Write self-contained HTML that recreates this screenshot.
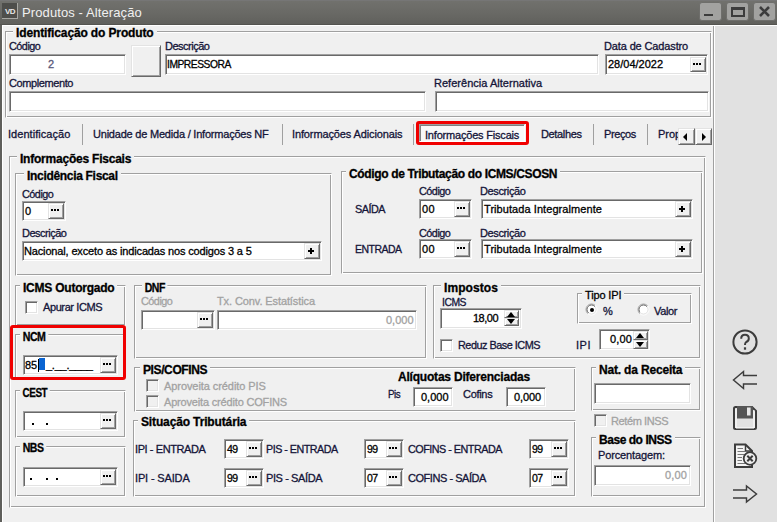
<!DOCTYPE html><html><head><meta charset="utf-8"><style>
*{margin:0;padding:0;box-sizing:border-box}
html,body{width:777px;height:522px;overflow:hidden;background:#f0f0f0;font-family:"Liberation Sans",sans-serif}
div{position:absolute}
.t{white-space:nowrap;color:#141438;-webkit-text-stroke:0.3px currentColor}
.grp{border:1px solid;border-color:#a0a0a0 #fff #fff #a0a0a0;box-shadow:inset 1px 1px 0 #fff,inset -1px -1px 0 #a0a0a0}
.ed{background:#fff;border:1px solid;border-color:#a0a0a0 #fff #fff #a0a0a0;box-shadow:inset 1px 1px 0 #696969,inset -1px -1px 0 #e3e3e3}
.bt{background:#f0f0f0;border:1px solid;border-color:#e3e3e3 #696969 #696969 #e3e3e3;box-shadow:inset 1px 1px 0 #fff,inset -1px -1px 0 #a0a0a0}
.chk{background:#fff;border:1px solid;border-color:#a0a0a0 #fff #fff #a0a0a0;box-shadow:inset 1px 1px 0 #696969,inset -1px -1px 0 #e3e3e3}
.chk.dis{background:#f0f0f0}
.dots{left:2px;top:5px;width:8px;height:2px;background:linear-gradient(90deg,#000 0 2px,transparent 2px 3px,#000 3px 5px,transparent 5px 6px,#000 6px 8px)}
.plus{left:3px;top:4px;width:6px;height:6px;background:linear-gradient(#000,#000) 0 2px/6px 2px no-repeat,linear-gradient(#000,#000) 2px 0/2px 6px no-repeat}
svg{position:absolute}
</style></head><body>
<div class="" style="left:0px;top:0px;width:777px;height:25px;background:linear-gradient(#767676 0,#767676 1px,#71716d 1px,#676763 16px,#60605c 24px,#545450 24px)"></div>
<div class="" style="left:0px;top:25px;width:2px;height:497px;background:#5f5f5b"></div>
<div class="" style="left:2px;top:25px;width:775px;height:1px;background:#fff"></div>
<div class="" style="left:2px;top:25px;width:1px;height:497px;background:#fff"></div>
<div class="" style="left:2px;top:3px;width:16px;height:16px;background:#4e4e4b;border-right:1px solid #a8a8a4;border-bottom:1px solid #a8a8a4"></div>
<div class="t" style="left:5px;top:8px;font-size:8px;line-height:8px;font-weight:bold;color:#e8e8e8;letter-spacing:-0.5px;-webkit-text-stroke:0">VD</div>
<div class="t" style="left:22.0px;top:6px;font-size:13px;line-height:13px;color:#f0f0f0;-webkit-text-stroke:0;letter-spacing:0.105px;">Produtos - Alteração</div>
<div class="" style="left:699px;top:2px;width:23px;height:19px;background:#a2a2a0;border-radius:3px;border:1px solid #6e6e6b"></div>
<div class="" style="left:726px;top:2px;width:23px;height:19px;background:#a2a2a0;border-radius:3px;border:1px solid #6e6e6b"></div>
<div class="" style="left:753px;top:2px;width:23px;height:19px;background:#a2a2a0;border-radius:3px;border:1px solid #6e6e6b"></div>
<div class="" style="left:704px;top:14px;width:9px;height:2px;background:#3c3c3c"></div>
<div class="" style="left:731px;top:7px;width:14px;height:10px;border:2px solid #3c3c3c;border-top-width:3px"></div>
<svg style="left:753px;top:2px" width="23" height="19"><path d="M7 5 L16 14 M16 5 L7 14" stroke="#3c3c3c" stroke-width="2.6"/></svg>
<div class="" style="left:713px;top:26px;width:1px;height:496px;background:#a0a0a0"></div>
<div class="" style="left:714px;top:26px;width:1px;height:496px;background:#fff"></div>
<div class="" style="left:715px;top:26px;width:62px;height:496px;background:#e1e1e1"></div>
<svg style="left:715px;top:320px" width="62" height="200" viewBox="715 320 62 200" fill="none" stroke="#3c3c3c">
<circle cx="745" cy="342" r="11.6" stroke-width="2"/>
<path d="M741.2 338.8 Q741.2 334.8 745 334.8 Q748.8 334.8 748.8 338.4 Q748.8 340.8 746.2 342 Q745 342.8 745 345" stroke-width="2"/>
<rect x="743.9" y="347.3" width="2.2" height="2.4" fill="#3c3c3c" stroke="none"/>
<path d="M757 375.5 H743.5 V371.5 L733.5 380 L743.5 388.5 V384 H757" stroke-width="1.45"/>
<path d="M733 490 H746.5 V486 L756.5 494 L746.5 502 V498 H733" stroke-width="1.45"/>
<path d="M735 407 H752 L756 411 V427.5 Q756 429 754.5 429 H735.5 Q734 429 734 427.5 V408.5 Q734 407 735.5 407 Z" stroke-width="2" fill="#e1e1e1"/>
<path d="M736 428 V409 M754 410 V428 M736 428 H754" stroke="#ffffff" stroke-width="1"/>
<rect x="737" y="406" width="16" height="12.5" fill="#555" stroke="none"/>
<rect x="747" y="407.5" width="3.6" height="8" fill="#e8e8e8" stroke="none"/>
<path d="M735 444.5 H745.5 L752 451 V467 H735 Z" stroke-width="2" fill="#f4f4f4"/>
<path d="M745.5 445 V451 H751.5" stroke-width="1.5"/>
<path d="M737.5 448.5 H743 M737.5 451.5 H745 M737.5 454.5 H745 M737.5 457.5 H742 M737.5 460.5 H742 M737.5 463.5 H745" stroke="#777" stroke-width="1"/>
<circle cx="750" cy="458.5" r="6.3" stroke-width="1.8" fill="#eeeeee"/>
<path d="M747.3 455.8 L752.7 461.2 M752.7 455.8 L747.3 461.2" stroke-width="2"/>
</svg>
<div class="grp" style="left:5px;top:31px;width:707px;height:87px;"></div>
<div class="t" style="left:13.0px;top:27px;font-size:12px;line-height:12px;font-weight:bold;color:#000;background:#f0f0f0;padding:0 3px;letter-spacing:-0.130px;">Identificação do Produto</div>
<div class="t" style="left:9.0px;top:41px;font-size:11px;line-height:11px;letter-spacing:-0.500px;transform:scaleX(0.9846);transform-origin:0 0;">Código</div>
<div class="t" style="left:165.0px;top:41px;font-size:11px;line-height:11px;letter-spacing:-0.500px;">Descrição</div>
<div class="t" style="left:604.0px;top:41px;font-size:11px;line-height:11px;letter-spacing:-0.133px;">Data de Cadastro</div>
<div class="ed" style="left:9px;top:54px;width:117px;height:21px;"></div>
<div class="t" style="left:48.0px;top:59px;font-size:11px;line-height:11px;color:#5a5a7a;">2</div>
<div class="bt" style="left:131px;top:45px;width:30px;height:32px;"></div>
<div class="ed" style="left:165px;top:54px;width:434px;height:21px;"></div>
<div class="t" style="left:167.06569343065692px;top:59px;font-size:11px;line-height:11px;color:#000;letter-spacing:-0.500px;transform:scaleX(0.9343);transform-origin:0 0;">IMPRESSORA</div>
<div class="ed" style="left:605px;top:54px;width:103px;height:21px;"></div>
<div class="bt" style="left:690px;top:57px;width:16px;height:15px;"><div class="dots"></div></div>
<div class="t" style="left:608.0px;top:59px;font-size:11px;line-height:11px;color:#000;">28/04/2022</div>
<div class="t" style="left:9.0px;top:78px;font-size:11px;line-height:11px;letter-spacing:-0.400px;">Complemento</div>
<div class="t" style="left:434.0px;top:78px;font-size:11px;line-height:11px;letter-spacing:0.024px;">Referência Alternativa</div>
<div class="ed" style="left:9px;top:91px;width:417px;height:21px;"></div>
<div class="ed" style="left:435px;top:91px;width:274px;height:21px;"></div>
<div class="t" style="left:8.0px;top:129px;font-size:11px;line-height:11px;letter-spacing:0.042px;">Identificação</div>
<div class="t" style="left:93.0px;top:129px;font-size:11px;line-height:11px;letter-spacing:-0.212px;">Unidade de Medida / Informações NF</div>
<div class="t" style="left:292.0px;top:129px;font-size:11px;line-height:11px;letter-spacing:-0.119px;">Informações Adicionais</div>
<div class="t" style="left:541.0px;top:129px;font-size:11px;line-height:11px;letter-spacing:-0.357px;">Detalhes</div>
<div class="t" style="left:604.0px;top:129px;font-size:11px;line-height:11px;letter-spacing:-0.400px;">Preços</div>
<div style="left:658px;top:124px;width:20px;height:20px;overflow:hidden"><div class="t" style="left:0;top:5px;font-size:11px;line-height:11px">Propriedades</div></div>
<div class="" style="left:82px;top:124px;width:1px;height:21px;background:#a0a0a0"></div>
<div class="" style="left:282px;top:124px;width:1px;height:21px;background:#a0a0a0"></div>
<div class="" style="left:413px;top:124px;width:1px;height:21px;background:#a0a0a0"></div>
<div class="" style="left:593px;top:124px;width:1px;height:21px;background:#a0a0a0"></div>
<div class="" style="left:647px;top:124px;width:1px;height:21px;background:#a0a0a0"></div>
<div class="" style="left:419px;top:124px;width:106px;height:18px;background:#f8f8f8;border:1px solid;border-color:#a0a0a0 #fff #fff #a0a0a0;box-shadow:inset 1px 1px 0 #808080"></div>
<div class="t" style="left:425.0px;top:130px;font-size:11px;line-height:11px;letter-spacing:-0.194px;">Informações Fiscais</div>
<div class="" style="left:416px;top:121px;width:113px;height:24px;border:3px solid #f00000;border-radius:3px"></div>
<div class="bt" style="left:678px;top:128px;width:17px;height:17px;"><div style="left:4px;top:4px;width:0;height:0;border-top:4px solid transparent;border-bottom:4px solid transparent;border-right:4px solid #000"></div></div>
<div class="bt" style="left:695px;top:128px;width:17px;height:17px;"><div style="left:6px;top:4px;width:0;height:0;border-top:4px solid transparent;border-bottom:4px solid transparent;border-left:4px solid #000"></div></div>
<div class="grp" style="left:9px;top:156px;width:697px;height:352px;"></div>
<div class="t" style="left:17.0px;top:153px;font-size:12px;line-height:12px;font-weight:bold;color:#000;background:#f0f0f0;padding:0 3px;letter-spacing:-0.222px;">Informações Fiscais</div>
<div class="grp" style="left:15px;top:173px;width:317px;height:103px;"></div>
<div class="t" style="left:24.0px;top:170px;font-size:12px;line-height:12px;font-weight:bold;color:#000;background:#f0f0f0;padding:0 3px;letter-spacing:-0.312px;">Incidência Fiscal</div>
<div class="t" style="left:22.0px;top:189px;font-size:11px;line-height:11px;letter-spacing:-0.500px;transform:scaleX(0.9846);transform-origin:0 0;">Código</div>
<div class="ed" style="left:22px;top:201px;width:44px;height:20px;"></div>
<div class="bt" style="left:48px;top:203px;width:16px;height:16px;"><div class="dots"></div></div>
<div class="t" style="left:25.0px;top:206px;font-size:11px;line-height:11px;color:#000;">0</div>
<div class="t" style="left:22.0px;top:228px;font-size:11px;line-height:11px;letter-spacing:-0.500px;">Descrição</div>
<div class="ed" style="left:22px;top:241px;width:300px;height:20px;"></div>
<div class="bt" style="left:304px;top:243px;width:16px;height:16px;"><div class="plus"></div></div>
<div class="t" style="left:24.0px;top:246px;font-size:11px;line-height:11px;color:#000;letter-spacing:-0.152px;">Nacional, exceto as indicadas nos codigos 3 a 5</div>
<div class="grp" style="left:341px;top:171px;width:362px;height:103px;"></div>
<div class="t" style="left:346.0px;top:168px;font-size:12px;line-height:12px;font-weight:bold;color:#000;background:#f0f0f0;padding:0 3px;letter-spacing:-0.348px;">Código de Tributação do ICMS/CSOSN</div>
<div class="t" style="left:419.0px;top:186px;font-size:11px;line-height:11px;letter-spacing:-0.500px;transform:scaleX(0.9846);transform-origin:0 0;">Código</div>
<div class="t" style="left:480.0px;top:186px;font-size:11px;line-height:11px;letter-spacing:-0.375px;">Descrição</div>
<div class="t" style="left:355.0px;top:204px;font-size:11px;line-height:11px;letter-spacing:-0.500px;transform:scaleX(0.9844);transform-origin:0 0;">SAÍDA</div>
<div class="ed" style="left:419px;top:199px;width:53px;height:20px;"></div>
<div class="bt" style="left:454px;top:201px;width:16px;height:16px;"><div class="dots"></div></div>
<div class="t" style="left:422.0px;top:204px;font-size:11px;line-height:11px;color:#000;letter-spacing:0.500px;">00</div>
<div class="ed" style="left:481px;top:199px;width:212px;height:20px;"></div>
<div class="bt" style="left:675px;top:201px;width:16px;height:16px;"><div class="plus"></div></div>
<div class="t" style="left:484.0px;top:204px;font-size:11px;line-height:11px;color:#000;letter-spacing:0.068px;">Tributada Integralmente</div>
<div class="t" style="left:419.0px;top:228px;font-size:11px;line-height:11px;letter-spacing:-0.500px;transform:scaleX(0.9846);transform-origin:0 0;">Código</div>
<div class="t" style="left:480.0px;top:228px;font-size:11px;line-height:11px;letter-spacing:-0.375px;">Descrição</div>
<div class="t" style="left:355.0px;top:244px;font-size:11px;line-height:11px;letter-spacing:-0.500px;transform:scaleX(0.9500);transform-origin:0 0;">ENTRADA</div>
<div class="ed" style="left:419px;top:239px;width:53px;height:20px;"></div>
<div class="bt" style="left:454px;top:241px;width:16px;height:16px;"><div class="dots"></div></div>
<div class="t" style="left:422.0px;top:244px;font-size:11px;line-height:11px;color:#000;letter-spacing:0.500px;">00</div>
<div class="ed" style="left:481px;top:239px;width:212px;height:20px;"></div>
<div class="bt" style="left:675px;top:241px;width:16px;height:16px;"><div class="plus"></div></div>
<div class="t" style="left:484.0px;top:244px;font-size:11px;line-height:11px;color:#000;letter-spacing:0.068px;">Tributada Integralmente</div>
<div class="grp" style="left:15px;top:285px;width:111px;height:41px;"></div>
<div class="t" style="left:20.0px;top:282px;font-size:12px;line-height:12px;font-weight:bold;color:#000;background:#f0f0f0;padding:0 3px;letter-spacing:-0.231px;">ICMS Outorgado</div>
<div class="chk" style="left:25px;top:301px;width:13px;height:13px;"></div>
<div class="t" style="left:43.0px;top:302px;font-size:11px;line-height:11px;letter-spacing:-0.400px;">Apurar ICMS</div>
<div class="grp" style="left:15px;top:334px;width:111px;height:45px;"></div>
<div class="t" style="left:20.0px;top:331px;font-size:12px;line-height:12px;font-weight:bold;color:#000;background:#f0f0f0;padding:0 3px;letter-spacing:-0.500px;transform:scaleX(0.8846);transform-origin:0 0;">NCM</div>
<div class="ed" style="left:23px;top:355px;width:95px;height:20px;"></div>
<div class="bt" style="left:100px;top:357px;width:16px;height:16px;"><div class="dots"></div></div>
<div class="t" style="left:25.0px;top:360px;font-size:11px;line-height:11px;color:#000;">85</div>
<div class="" style="left:38px;top:359px;width:1px;height:13px;background:#000"></div>
<div class="" style="left:39px;top:358px;width:6px;height:12px;background:#0a64d2"></div>
<div class="t" style="left:46.0px;top:360px;font-size:11px;line-height:11px;color:#000;letter-spacing:-0.250px;">_.__.____</div>
<div class="" style="left:10px;top:325px;width:116px;height:55px;border:3px solid #f00000;border-radius:3px"></div>
<div class="grp" style="left:15px;top:390px;width:111px;height:48px;"></div>
<div class="t" style="left:20.0px;top:387px;font-size:12px;line-height:12px;font-weight:bold;color:#000;background:#f0f0f0;padding:0 3px;letter-spacing:-0.500px;transform:scaleX(0.8254);transform-origin:0 0;">CEST</div>
<div class="ed" style="left:23px;top:411px;width:95px;height:20px;"></div>
<div class="bt" style="left:100px;top:413px;width:16px;height:16px;"><div class="dots"></div></div>
<div class="" style="left:32px;top:423px;width:2px;height:2px;background:#000"></div>
<div class="" style="left:46px;top:423px;width:2px;height:2px;background:#000"></div>
<div class="grp" style="left:15px;top:446px;width:111px;height:51px;"></div>
<div class="t" style="left:20.0px;top:442px;font-size:12px;line-height:12px;font-weight:bold;color:#000;background:#f0f0f0;padding:0 3px;letter-spacing:-0.500px;transform:scaleX(0.8750);transform-origin:0 0;">NBS</div>
<div class="ed" style="left:23px;top:467px;width:95px;height:20px;"></div>
<div class="bt" style="left:100px;top:469px;width:16px;height:16px;"><div class="dots"></div></div>
<div class="" style="left:30px;top:478px;width:2px;height:2px;background:#000"></div>
<div class="" style="left:46px;top:478px;width:2px;height:2px;background:#000"></div>
<div class="" style="left:56px;top:478px;width:2px;height:2px;background:#000"></div>
<div class="grp" style="left:134px;top:285px;width:293px;height:74px;"></div>
<div class="t" style="left:142.0px;top:282px;font-size:12px;line-height:12px;font-weight:bold;color:#000;background:#f0f0f0;padding:0 3px;letter-spacing:-0.500px;transform:scaleX(0.8750);transform-origin:0 0;">DNF</div>
<div class="t" style="left:141.0px;top:296px;font-size:11px;line-height:11px;color:#a2a2a2;letter-spacing:-0.500px;transform:scaleX(0.9846);transform-origin:0 0;">Código</div>
<div class="t" style="left:217.0px;top:296px;font-size:11px;line-height:11px;color:#a2a2a2;letter-spacing:-0.100px;">Tx. Conv. Estatística</div>
<div class="ed" style="left:141px;top:310px;width:74px;height:20px;"></div>
<div class="bt" style="left:197px;top:312px;width:16px;height:16px;"><div class="dots"></div></div>
<div class="ed" style="left:217px;top:310px;width:200px;height:20px;"></div>
<div class="t" style="left:386.0px;top:315px;font-size:11px;line-height:11px;color:#a2a2a2;">0,000</div>
<div class="grp" style="left:433px;top:285px;width:268px;height:74px;"></div>
<div class="t" style="left:441.0px;top:282px;font-size:12px;line-height:12px;font-weight:bold;color:#000;background:#f0f0f0;padding:0 3px;letter-spacing:0.071px;">Impostos</div>
<div class="t" style="left:442.05882352941177px;top:297px;font-size:11px;line-height:11px;letter-spacing:-0.500px;transform:scaleX(0.9412);transform-origin:0 0;">ICMS</div>
<div class="ed" style="left:440px;top:308px;width:82px;height:21px;"></div>
<div class="t" style="left:473.0px;top:313px;font-size:11px;line-height:11px;color:#000;letter-spacing:-0.500px;">18,00</div>
<div class="bt" style="left:504px;top:310px;width:15px;height:8px;"><div style="left:2px;top:1px;width:0;height:0;border-left:4.5px solid transparent;border-right:4.5px solid transparent;border-bottom:5px solid #000"></div></div>
<div class="bt" style="left:504px;top:318px;width:15px;height:8px;"><div style="left:2px;top:0px;width:0;height:0;border-left:4.5px solid transparent;border-right:4.5px solid transparent;border-top:5px solid #000"></div></div>
<div class="chk" style="left:440px;top:339px;width:13px;height:13px;"></div>
<div class="t" style="left:458.0px;top:340px;font-size:11px;line-height:11px;letter-spacing:-0.500px;transform:scaleX(0.9881);transform-origin:0 0;">Reduz Base ICMS</div>
<div class="grp" style="left:577px;top:293px;width:115px;height:31px;"></div>
<div class="t" style="left:582.0px;top:290px;font-size:11px;line-height:11px;color:#000;background:#f0f0f0;padding:0 3px;letter-spacing:-0.143px;">Tipo IPI</div>
<svg style="left:584px;top:302px" width="70" height="16" viewBox="584 302 70 16"><defs><linearGradient id="ro" x1="0" y1="0" x2="1" y2="1"><stop offset="0.5" stop-color="#a0a0a0"/><stop offset="0.5" stop-color="#ffffff"/></linearGradient><linearGradient id="ri" x1="0" y1="0" x2="1" y2="1"><stop offset="0.5" stop-color="#696969"/><stop offset="0.5" stop-color="#e3e3e3"/></linearGradient></defs><circle cx="591.5" cy="309.5" r="5.5" fill="none" stroke="url(#ro)" stroke-width="1"/><circle cx="591.5" cy="309.5" r="4.5" fill="#fff" stroke="url(#ri)" stroke-width="1"/><circle cx="643.5" cy="309.5" r="5.5" fill="none" stroke="url(#ro)" stroke-width="1"/><circle cx="643.5" cy="309.5" r="4.5" fill="#fff" stroke="url(#ri)" stroke-width="1"/><circle cx="592" cy="310" r="2" fill="#000"/></svg>
<div class="t" style="left:603.0px;top:306px;font-size:11px;line-height:11px;">%</div>
<div class="t" style="left:654.0px;top:306px;font-size:11px;line-height:11px;letter-spacing:-0.375px;">Valor</div>
<div class="t" style="left:576.0px;top:340px;font-size:11px;line-height:11px;letter-spacing:0.500px;">IPI</div>
<div class="ed" style="left:599px;top:329px;width:51px;height:21px;"></div>
<div class="t" style="left:610.0px;top:334px;font-size:11px;line-height:11px;color:#000;letter-spacing:0.167px;">0,00</div>
<div class="bt" style="left:633px;top:331px;width:15px;height:9px;"><div style="left:2px;top:1px;width:0;height:0;border-left:4.5px solid transparent;border-right:4.5px solid transparent;border-bottom:5px solid #000"></div></div>
<div class="bt" style="left:633px;top:340px;width:15px;height:9px;"><div style="left:2px;top:1px;width:0;height:0;border-left:4.5px solid transparent;border-right:4.5px solid transparent;border-top:5px solid #000"></div></div>
<div class="grp" style="left:134px;top:367px;width:442px;height:45px;"></div>
<div class="t" style="left:140.0px;top:364px;font-size:12px;line-height:12px;font-weight:bold;color:#000;background:#f0f0f0;padding:0 3px;letter-spacing:-0.389px;">PIS/COFINS</div>
<div class="chk dis" style="left:146px;top:379px;width:13px;height:13px;"></div>
<div class="t" style="left:164.0px;top:381px;font-size:11px;line-height:11px;color:#a2a2a2;letter-spacing:-0.075px;">Aproveita crédito PIS</div>
<div class="chk dis" style="left:146px;top:395px;width:13px;height:13px;"></div>
<div class="t" style="left:164.0px;top:397px;font-size:11px;line-height:11px;color:#a2a2a2;letter-spacing:-0.174px;">Aproveita crédito COFINS</div>
<div class="t" style="left:398.0px;top:371px;font-size:12px;line-height:12px;font-weight:bold;color:#000;letter-spacing:-0.205px;">Alíquotas Diferenciadas</div>
<div class="t" style="left:388.0px;top:389px;font-size:11px;line-height:11px;letter-spacing:-0.500px;transform:scaleX(0.8929);transform-origin:0 0;">Pis</div>
<div class="ed" style="left:413px;top:387px;width:40px;height:20px;"></div>
<div class="t" style="left:421.0px;top:392px;font-size:11px;line-height:11px;color:#000;">0,000</div>
<div class="t" style="left:463.0px;top:389px;font-size:11px;line-height:11px;letter-spacing:-0.300px;">Cofins</div>
<div class="ed" style="left:506px;top:387px;width:40px;height:20px;"></div>
<div class="t" style="left:514.0px;top:392px;font-size:11px;line-height:11px;color:#000;letter-spacing:-0.125px;">0,000</div>
<div class="grp" style="left:133px;top:420px;width:443px;height:77px;"></div>
<div class="t" style="left:138.0px;top:416px;font-size:12px;line-height:12px;font-weight:bold;color:#000;background:#f0f0f0;padding:0 3px;letter-spacing:-0.139px;">Situação Tributária</div>
<div class="t" style="left:135.0px;top:444px;font-size:11px;line-height:11px;letter-spacing:-0.417px;">IPI - ENTRADA</div>
<div class="ed" style="left:224px;top:439px;width:40px;height:20px;"></div>
<div class="bt" style="left:246px;top:441px;width:16px;height:16px;"><div class="dots"></div></div>
<div class="t" style="left:227.0px;top:444px;font-size:11px;line-height:11px;color:#000;letter-spacing:-0.500px;transform:scaleX(0.9565);transform-origin:0 0;">49</div>
<div class="t" style="left:266.0px;top:444px;font-size:11px;line-height:11px;letter-spacing:-0.500px;transform:scaleX(0.9733);transform-origin:0 0;">PIS - ENTRADA</div>
<div class="ed" style="left:364px;top:439px;width:40px;height:20px;"></div>
<div class="bt" style="left:386px;top:441px;width:16px;height:16px;"><div class="dots"></div></div>
<div class="t" style="left:367.0px;top:444px;font-size:11px;line-height:11px;color:#000;letter-spacing:-0.500px;transform:scaleX(0.9565);transform-origin:0 0;">99</div>
<div class="t" style="left:408.0px;top:444px;font-size:11px;line-height:11px;letter-spacing:-0.500px;transform:scaleX(0.9793);transform-origin:0 0;">COFINS - ENTRADA</div>
<div class="ed" style="left:529px;top:439px;width:40px;height:20px;"></div>
<div class="bt" style="left:551px;top:441px;width:16px;height:16px;"><div class="dots"></div></div>
<div class="t" style="left:532.0px;top:444px;font-size:11px;line-height:11px;color:#000;letter-spacing:-0.500px;transform:scaleX(0.9565);transform-origin:0 0;">99</div>
<div class="t" style="left:135.0px;top:473px;font-size:11px;line-height:11px;letter-spacing:-0.150px;">IPI - SAIDA</div>
<div class="ed" style="left:224px;top:468px;width:40px;height:20px;"></div>
<div class="bt" style="left:246px;top:470px;width:16px;height:16px;"><div class="dots"></div></div>
<div class="t" style="left:227.0px;top:473px;font-size:11px;line-height:11px;color:#000;letter-spacing:-0.500px;transform:scaleX(0.9565);transform-origin:0 0;">99</div>
<div class="t" style="left:266.0px;top:473px;font-size:11px;line-height:11px;letter-spacing:-0.400px;">PIS - SAÍDA</div>
<div class="ed" style="left:364px;top:468px;width:40px;height:20px;"></div>
<div class="bt" style="left:386px;top:470px;width:16px;height:16px;"><div class="dots"></div></div>
<div class="t" style="left:367.0px;top:473px;font-size:11px;line-height:11px;color:#000;letter-spacing:-0.500px;transform:scaleX(0.9565);transform-origin:0 0;">07</div>
<div class="t" style="left:408.0px;top:473px;font-size:11px;line-height:11px;letter-spacing:-0.462px;">COFINS - SAÍDA</div>
<div class="ed" style="left:529px;top:468px;width:40px;height:20px;"></div>
<div class="bt" style="left:551px;top:470px;width:16px;height:16px;"><div class="dots"></div></div>
<div class="t" style="left:532.0px;top:473px;font-size:11px;line-height:11px;color:#000;letter-spacing:-0.500px;transform:scaleX(0.9565);transform-origin:0 0;">07</div>
<div class="grp" style="left:591px;top:367px;width:110px;height:44px;"></div>
<div class="t" style="left:596.0px;top:364px;font-size:12px;line-height:12px;font-weight:bold;color:#000;background:#f0f0f0;padding:0 3px;letter-spacing:-0.179px;">Nat. da Receita</div>
<div class="ed" style="left:594px;top:383px;width:97px;height:21px;"></div>
<div class="chk dis" style="left:594px;top:414px;width:13px;height:13px;"></div>
<div class="t" style="left:611.0px;top:416px;font-size:11px;line-height:11px;color:#a2a2a2;letter-spacing:-0.389px;">Retém INSS</div>
<div class="grp" style="left:591px;top:437px;width:110px;height:60px;"></div>
<div class="t" style="left:596.0px;top:434px;font-size:12px;line-height:12px;font-weight:bold;color:#000;background:#f0f0f0;padding:0 3px;letter-spacing:-0.455px;">Base do INSS</div>
<div class="t" style="left:598.0px;top:450px;font-size:11px;line-height:11px;letter-spacing:-0.136px;">Porcentagem:</div>
<div class="ed" style="left:594px;top:465px;width:97px;height:21px;"></div>
<div class="t" style="left:665.0px;top:470px;font-size:11px;line-height:11px;color:#a2a2a2;letter-spacing:0.167px;">0,00</div>
</body></html>
